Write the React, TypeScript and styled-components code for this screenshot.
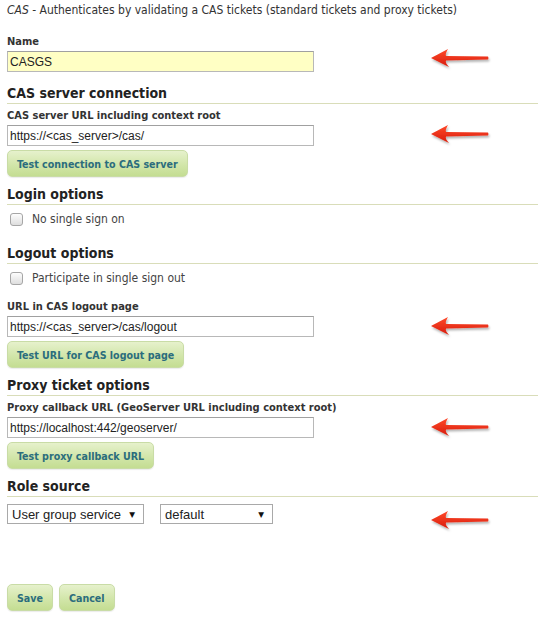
import React from "react";
import styled, { createGlobalStyle } from "styled-components";

const GlobalStyle = createGlobalStyle`
  html, body {
    margin: 0;
    padding: 0;
    background: #ffffff;
  }
  body {
    font-family: "DejaVu Sans Condensed", "DejaVu Sans", sans-serif;
    font-size: 12px;
    color: #333333;
  }
`;

const Page = styled.div`
  position: relative;
  width: 538px;
  height: 624px;
  padding: 3px 0 0 7px;
  box-sizing: border-box;
  display: flex;
  flex-direction: column;
`;

const Description = styled.div`
  line-height: 15px;
  font-size: 12px;
  color: #333333;

  em {
    font-style: italic;
  }
`;

const Label = styled.label<{ gap: number }>`
  display: block;
  margin-top: ${({ gap }) => gap}px;
  line-height: 14px;
  font-size: 11px;
  font-weight: bold;
  color: #333333;
`;

const TextInput = styled.input<{ highlight?: boolean }>`
  display: block;
  box-sizing: border-box;
  width: 307px;
  height: 21px;
  margin-top: 2px;
  padding: 0 2px;
  border: 1px solid #b8b8b8;
  border-top-color: #a0a0a0;
  background: ${({ highlight }) => (highlight ? "#ffffc4" : "#ffffff")};
  font-family: "Liberation Sans", Arial, sans-serif;
  font-size: 12px;
  color: #222222;
  outline: none;
`;

const Button = styled.button<{ gap?: number }>`
  display: block;
  box-sizing: border-box;
  height: 27px;
  margin-top: ${({ gap }) => gap ?? 4}px;
  padding: 0 9px;
  border: 1px solid #c9dca6;
  border-radius: 5px;
  background: linear-gradient(to bottom, #e6f1cc 0%, #d2e6aa 55%, #c4dd92 100%);
  box-shadow: 0 1px 1px rgba(0, 0, 0, 0.08);
  font-family: "DejaVu Sans Condensed", "DejaVu Sans", sans-serif;
  font-size: 10.6px;
  font-weight: bold;
  color: #2b6d7d;
  cursor: pointer;
  align-self: flex-start;
`;

const SectionHeading = styled.h3<{ gap: number }>`
  margin: ${({ gap }) => gap}px 0 0;
  padding-bottom: 1px;
  line-height: 18px;
  border-bottom: 1px solid #d9ddb9;
  font-size: 14px;
  font-weight: bold;
  color: #222222;
`;

const CheckRow = styled.label`
  display: flex;
  align-items: center;
  gap: 9px;
  height: 15px;
  margin-top: 7px;
  padding-left: 3px;
  color: #444444;
  font-size: 12px;
  line-height: 15px;
`;

const CheckBox = styled.input`
  appearance: none;
  margin: 0;
  width: 13px;
  height: 13px;
  border: 1px solid #a6a6a6;
  border-radius: 3px;
  background: linear-gradient(to bottom, #fdfdfd, #dedede);
  box-sizing: border-box;
`;

const SelectRow = styled.div`
  display: flex;
  gap: 16px;
  margin-top: 7px;
`;

const SelectBox = styled.div<{ width: number }>`
  display: flex;
  align-items: center;
  justify-content: space-between;
  box-sizing: border-box;
  width: ${({ width }) => width}px;
  height: 20px;
  padding: 0 8px 0 4px;
  border: 1px solid #a9a9a9;
  background: #ffffff;
  font-family: "Liberation Sans", Arial, sans-serif;
  font-size: 13px;
  color: #222222;
`;

const Caret = styled.span`
  font-family: "DejaVu Sans", sans-serif;
  font-size: 7.5px;
  color: #111111;
`;

const Actions = styled.div`
  display: flex;
  gap: 6px;
  margin-top: 60px;
`;

const ArrowMark = styled.svg<{ top: number }>`
  position: absolute;
  left: 428px;
  top: ${({ top }) => top}px;
  width: 64px;
  height: 24px;
  overflow: visible;
`;

const Arrow = ({ top }: { top: number }) => (
  <ArrowMark top={top} viewBox="0 0 64 24">
    <defs>
      <linearGradient id={`red${top}`} x1="0" y1="0" x2="0" y2="1">
        <stop offset="0" stopColor="#ff4a2a" />
        <stop offset="1" stopColor="#d81c0c" />
      </linearGradient>
      <filter id={`sh${top}`} x="-20%" y="-50%" width="140%" height="200%">
        <feDropShadow dx="1" dy="2" stdDeviation="1.2" floodColor="#000" floodOpacity="0.3" />
      </filter>
    </defs>
    <path
      d="M3 12 L20 3 Q17 8 18 10 L60 10.5 Q61 12 60 13.5 L18 14.5 Q17 17 21 21 Z"
      fill={`url(#red${top})`}
      filter={`url(#sh${top})`}
    />
  </ArrowMark>
);

const App = () => {
  return (
    <>
      <GlobalStyle />
      <Page>
        <Description>
          <em>CAS</em> - Authenticates by validating a CAS tickets (standard
          tickets and proxy tickets)
        </Description>

        <Label gap={17}>Name</Label>
        <TextInput highlight defaultValue="CASGS" />

        <SectionHeading gap={12}>CAS server connection</SectionHeading>
        <Label gap={5}>CAS server URL including context root</Label>
        <TextInput defaultValue="https://<cas_server>/cas/" />
        <Button>Test connection to CAS server</Button>

        <SectionHeading gap={8}>Login options</SectionHeading>
        <CheckRow>
          <CheckBox type="checkbox" />
          No single sign on
        </CheckRow>

        <SectionHeading gap={17}>Logout options</SectionHeading>
        <CheckRow>
          <CheckBox type="checkbox" />
          Participate in single sign out
        </CheckRow>
        <Label gap={14}>URL in CAS logout page</Label>
        <TextInput defaultValue="https://<cas_server>/cas/logout" />
        <Button>Test URL for CAS logout page</Button>

        <SectionHeading gap={8}>Proxy ticket options</SectionHeading>
        <Label gap={5}>Proxy callback URL (GeoServer URL including context root)</Label>
        <TextInput defaultValue="https://localhost:442/geoserver/" />
        <Button>Test proxy callback URL</Button>

        <SectionHeading gap={8}>Role source</SectionHeading>
        <SelectRow>
          <SelectBox width={137}>
            User group service <Caret>▼</Caret>
          </SelectBox>
          <SelectBox width={113}>
            default <Caret>▼</Caret>
          </SelectBox>
        </SelectRow>

        <Actions>
          <Button gap={0}>Save</Button>
          <Button gap={0}>Cancel</Button>
        </Actions>

        <Arrow top={46} />
        <Arrow top={122} />
        <Arrow top={314} />
        <Arrow top={415} />
        <Arrow top={508} />
      </Page>
    </>
  );
};

export default App;
